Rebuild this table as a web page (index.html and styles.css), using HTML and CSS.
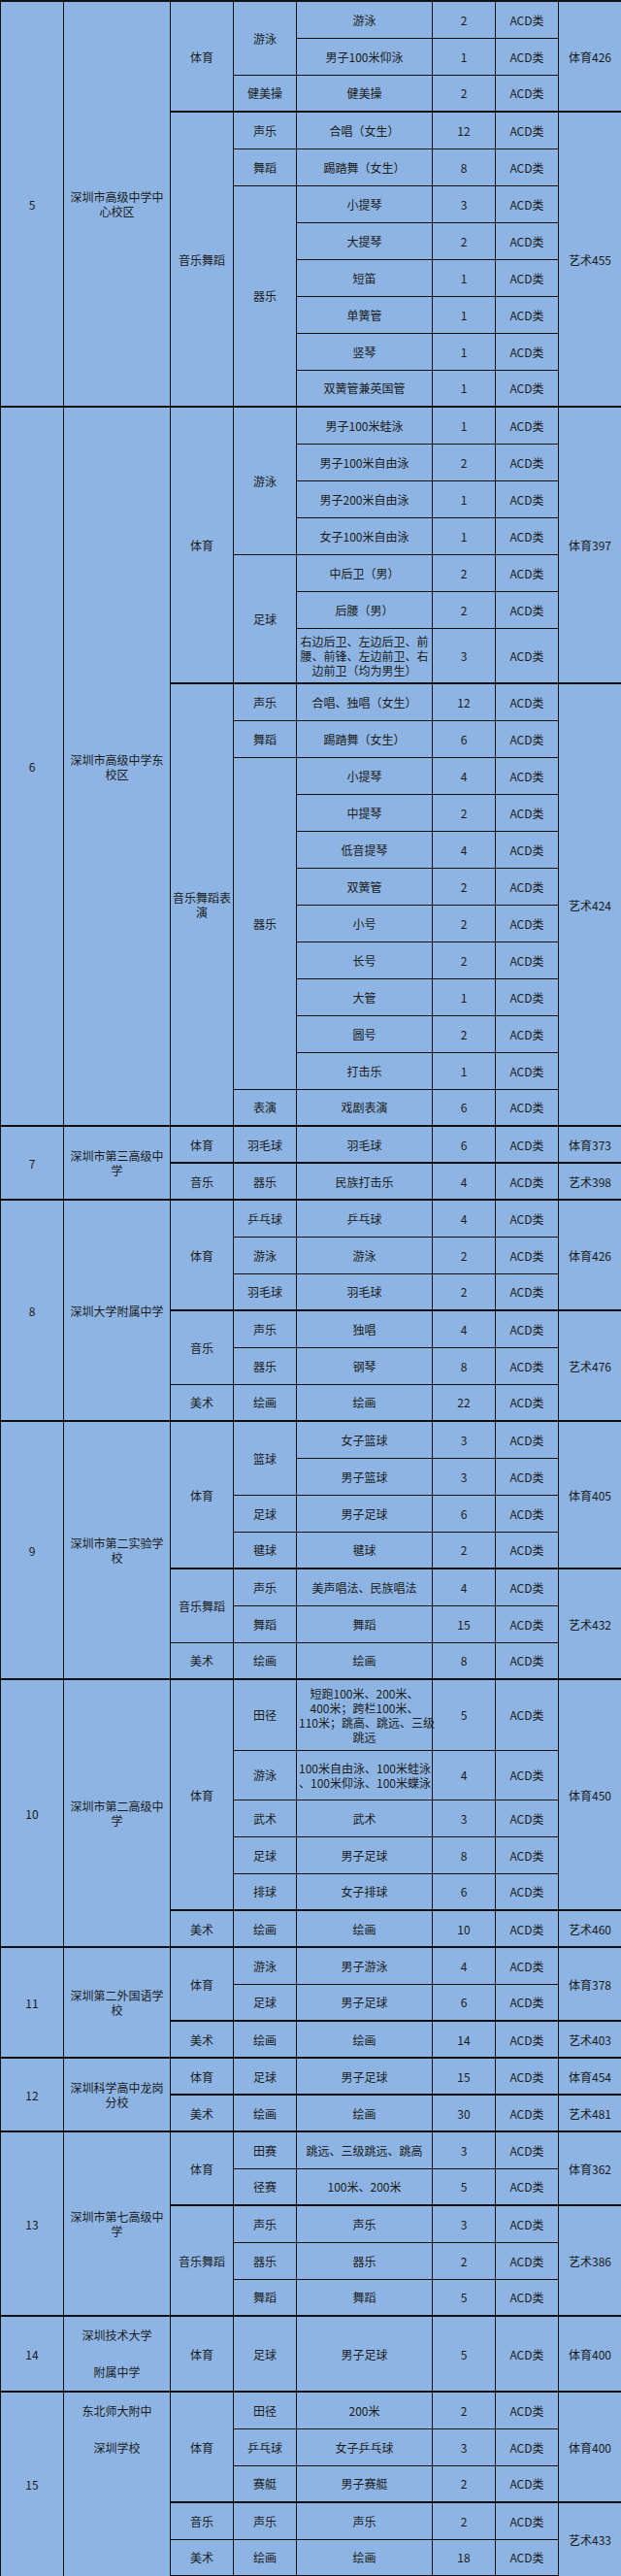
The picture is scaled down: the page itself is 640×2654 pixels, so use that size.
FILE: index.html
```
<!DOCTYPE html>
<html lang="zh-CN">
<head>
<meta charset="utf-8">
<title>招生计划</title>
<link rel="stylesheet" href="styles.css">
</head>
<body>
<table class="sheet">
<colgroup>
<col class="w-no"><col class="w-school"><col class="w-cat"><col class="w-sub"><col class="w-item"><col class="w-num"><col class="w-type"><col class="w-score">
</colgroup>
<tbody>
<tr class="grp"><td rowspan="11">5</td><td rowspan="11">深圳市高级中学中心校区</td><td rowspan="3">体育</td><td rowspan="2">游泳</td><td>游泳</td><td>2</td><td>ACD类</td><td rowspan="3">体育426</td></tr>
<tr><td>男子100米仰泳</td><td>1</td><td>ACD类</td></tr>
<tr><td>健美操</td><td>健美操</td><td>2</td><td>ACD类</td></tr>
<tr class="grp"><td rowspan="8">音乐舞蹈</td><td>声乐</td><td>合唱（女生）</td><td>12</td><td>ACD类</td><td rowspan="8">艺术455</td></tr>
<tr><td>舞蹈</td><td>踢踏舞（女生）</td><td>8</td><td>ACD类</td></tr>
<tr><td rowspan="6">器乐</td><td>小提琴</td><td>3</td><td>ACD类</td></tr>
<tr><td>大提琴</td><td>2</td><td>ACD类</td></tr>
<tr><td>短笛</td><td>1</td><td>ACD类</td></tr>
<tr><td>单簧管</td><td>1</td><td>ACD类</td></tr>
<tr><td>竖琴</td><td>1</td><td>ACD类</td></tr>
<tr><td>双簧管兼英国管</td><td>1</td><td>ACD类</td></tr>
<tr class="grp"><td rowspan="19">6</td><td rowspan="19">深圳市高级中学东校区</td><td rowspan="7">体育</td><td rowspan="4">游泳</td><td>男子100米蛙泳</td><td>1</td><td>ACD类</td><td rowspan="7">体育397</td></tr>
<tr><td>男子100米自由泳</td><td>2</td><td>ACD类</td></tr>
<tr><td>男子200米自由泳</td><td>1</td><td>ACD类</td></tr>
<tr><td>女子100米自由泳</td><td>1</td><td>ACD类</td></tr>
<tr><td rowspan="3">足球</td><td>中后卫（男）</td><td>2</td><td>ACD类</td></tr>
<tr><td>后腰（男）</td><td>2</td><td>ACD类</td></tr>
<tr class="h57"><td><span class="ln">右边后卫、左边后卫、前</span><br><span class="ln">腰、前锋、左边前卫、右</span><br><span class="ln">边前卫（均为男生）</span></td><td>3</td><td>ACD类</td></tr>
<tr class="grp"><td rowspan="12"><span class="ln">音乐舞蹈表</span><br>演</td><td>声乐</td><td>合唱、独唱（女生）</td><td>12</td><td>ACD类</td><td rowspan="12">艺术424</td></tr>
<tr><td>舞蹈</td><td>踢踏舞（女生）</td><td>6</td><td>ACD类</td></tr>
<tr><td rowspan="9">器乐</td><td>小提琴</td><td>4</td><td>ACD类</td></tr>
<tr><td>中提琴</td><td>2</td><td>ACD类</td></tr>
<tr><td>低音提琴</td><td>4</td><td>ACD类</td></tr>
<tr><td>双簧管</td><td>2</td><td>ACD类</td></tr>
<tr><td>小号</td><td>2</td><td>ACD类</td></tr>
<tr><td>长号</td><td>2</td><td>ACD类</td></tr>
<tr><td>大管</td><td>1</td><td>ACD类</td></tr>
<tr><td>圆号</td><td>2</td><td>ACD类</td></tr>
<tr><td>打击乐</td><td>1</td><td>ACD类</td></tr>
<tr><td>表演</td><td>戏剧表演</td><td>6</td><td>ACD类</td></tr>
<tr class="grp"><td rowspan="2">7</td><td rowspan="2">深圳市第三高级中学</td><td>体育</td><td>羽毛球</td><td>羽毛球</td><td>6</td><td>ACD类</td><td>体育373</td></tr>
<tr class="grp"><td>音乐</td><td>器乐</td><td>民族打击乐</td><td>4</td><td>ACD类</td><td>艺术398</td></tr>
<tr class="grp"><td rowspan="6">8</td><td rowspan="6">深圳大学附属中学</td><td rowspan="3">体育</td><td>乒乓球</td><td>乒乓球</td><td>4</td><td>ACD类</td><td rowspan="3">体育426</td></tr>
<tr><td>游泳</td><td>游泳</td><td>2</td><td>ACD类</td></tr>
<tr><td>羽毛球</td><td>羽毛球</td><td>2</td><td>ACD类</td></tr>
<tr class="grp"><td rowspan="2">音乐</td><td>声乐</td><td>独唱</td><td>4</td><td>ACD类</td><td rowspan="3">艺术476</td></tr>
<tr><td>器乐</td><td>钢琴</td><td>8</td><td>ACD类</td></tr>
<tr><td>美术</td><td>绘画</td><td>绘画</td><td>22</td><td>ACD类</td></tr>
<tr class="grp"><td rowspan="7">9</td><td rowspan="7">深圳市第二实验学校</td><td rowspan="4">体育</td><td rowspan="2">篮球</td><td>女子篮球</td><td>3</td><td>ACD类</td><td rowspan="4">体育405</td></tr>
<tr><td>男子篮球</td><td>3</td><td>ACD类</td></tr>
<tr><td>足球</td><td>男子足球</td><td>6</td><td>ACD类</td></tr>
<tr><td>毽球</td><td>毽球</td><td>2</td><td>ACD类</td></tr>
<tr class="grp"><td rowspan="2">音乐舞蹈</td><td>声乐</td><td>美声唱法、民族唱法</td><td>4</td><td>ACD类</td><td rowspan="3">艺术432</td></tr>
<tr><td>舞蹈</td><td>舞蹈</td><td>15</td><td>ACD类</td></tr>
<tr><td>美术</td><td>绘画</td><td>绘画</td><td>8</td><td>ACD类</td></tr>
<tr class="grp h73"><td rowspan="6">10</td><td rowspan="6">深圳市第二高级中学</td><td rowspan="5">体育</td><td>田径</td><td><span class="ln">短跑100米、200米、</span><br><span class="ln">400米；跨栏100米、</span><br><span class="ln">110米；跳高、跳远、三级</span><br><span class="ln">跳远</span></td><td>5</td><td>ACD类</td><td rowspan="5">体育450</td></tr>
<tr class="h51"><td>游泳</td><td><span class="ln">100米自由泳、100米蛙泳</span><br><span class="ln">、100米仰泳、100米蝶泳</span></td><td>4</td><td>ACD类</td></tr>
<tr><td>武术</td><td>武术</td><td>3</td><td>ACD类</td></tr>
<tr><td>足球</td><td>男子足球</td><td>8</td><td>ACD类</td></tr>
<tr><td>排球</td><td>女子排球</td><td>6</td><td>ACD类</td></tr>
<tr class="grp"><td>美术</td><td>绘画</td><td>绘画</td><td>10</td><td>ACD类</td><td>艺术460</td></tr>
<tr class="grp"><td rowspan="3">11</td><td rowspan="3">深圳第二外国语学校</td><td rowspan="2">体育</td><td>游泳</td><td>男子游泳</td><td>4</td><td>ACD类</td><td rowspan="2">体育378</td></tr>
<tr><td>足球</td><td>男子足球</td><td>6</td><td>ACD类</td></tr>
<tr class="grp"><td>美术</td><td>绘画</td><td>绘画</td><td>14</td><td>ACD类</td><td>艺术403</td></tr>
<tr class="grp"><td rowspan="2">12</td><td rowspan="2">深圳科学高中龙岗分校</td><td>体育</td><td>足球</td><td>男子足球</td><td>15</td><td>ACD类</td><td>体育454</td></tr>
<tr class="grp"><td>美术</td><td>绘画</td><td>绘画</td><td>30</td><td>ACD类</td><td>艺术481</td></tr>
<tr class="grp"><td rowspan="5">13</td><td rowspan="5">深圳市第七高级中学</td><td rowspan="2">体育</td><td>田赛</td><td>跳远、三级跳远、跳高</td><td>3</td><td>ACD类</td><td rowspan="2">体育362</td></tr>
<tr><td>径赛</td><td>100米、200米</td><td>5</td><td>ACD类</td></tr>
<tr class="grp"><td rowspan="3">音乐舞蹈</td><td>声乐</td><td>声乐</td><td>3</td><td>ACD类</td><td rowspan="3">艺术386</td></tr>
<tr><td>器乐</td><td>器乐</td><td>2</td><td>ACD类</td></tr>
<tr><td>舞蹈</td><td>舞蹈</td><td>5</td><td>ACD类</td></tr>
<tr class="grp h76"><td>14</td><td class="tall-name">深圳技术大学<br>附属中学</td><td>体育</td><td>足球</td><td>男子足球</td><td>5</td><td>ACD类</td><td>体育400</td></tr>
<tr class="grp"><td rowspan="5">15</td><td rowspan="5" class="tall-name top">东北师大附中<br>深圳学校</td><td rowspan="3">体育</td><td>田径</td><td>200米</td><td>2</td><td>ACD类</td><td rowspan="3">体育400</td></tr>
<tr><td>乒乓球</td><td>女子乒乓球</td><td>3</td><td>ACD类</td></tr>
<tr><td>赛艇</td><td>男子赛艇</td><td>2</td><td>ACD类</td></tr>
<tr class="grp"><td>音乐</td><td>声乐</td><td>声乐</td><td>2</td><td>ACD类</td><td rowspan="2">艺术433</td></tr>
<tr><td>美术</td><td>绘画</td><td>绘画</td><td>18</td><td>ACD类</td></tr>
</tbody>
</table>
</body>
</html>
```

FILE: styles.css
```
html, body {
  margin: 0;
  padding: 0;
  background: #8db4e2;
}

body {
  font-family: "Noto Sans CJK SC", "Noto Sans", sans-serif;
  font-size: 12px;
  color: #1c1c1c;
}

.sheet {
  width: 640px;
  border-collapse: collapse;
  table-layout: fixed;
  background: #8db4e2;
}

.w-no { width: 65px; }
.w-school { width: 110px; }
.w-cat { width: 65px; }
.w-sub { width: 65px; }
.w-item { width: 140px; }
.w-num { width: 65px; }
.w-type { width: 65px; }
.w-score { width: 65px; }

.sheet tr { height: 38px; }
.sheet tr.h51 { height: 51px; }
.sheet tr.h57 { height: 57px; }
.sheet tr.h73 { height: 73px; }
.sheet tr.h76 { height: 76px; }

.sheet td {
  border: 1px solid #111111;
  padding: 0 2px;
  text-align: center;
  vertical-align: middle;
  line-height: 15px;
  overflow: visible;
}

.sheet tr.grp td {
  border-top-width: 2px;
}

.sheet tbody tr:last-child td {
  border-bottom-width: 2px;
}

.ln {
  white-space: nowrap;
}

.sheet td.tall-name {
  line-height: 38px;
}

.sheet td.top {
  vertical-align: top;
}
```
